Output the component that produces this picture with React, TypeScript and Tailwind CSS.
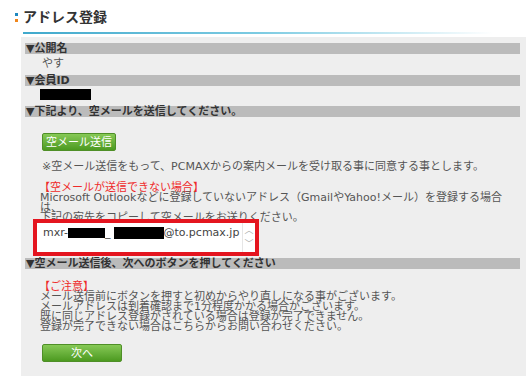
import React from 'react'

const font = { fontFamily: '"DejaVu Sans", "Noto Sans CJK JP", sans-serif' }

function SectionBar({ children }: { children: React.ReactNode }) {
  return (
    <div className="mr-[6px] h-[11px] whitespace-nowrap bg-[#bbbbbb] pl-[1px] text-[11px] font-bold leading-[11px] text-[#333]">
      ▼{children}
    </div>
  )
}

function GreenButton({ label, width }: { label: string; width: string }) {
  return (
    <div
      className={`${width} flex h-[18px] items-center justify-center rounded-[2px] border border-[#4f8f27] bg-gradient-to-b from-[#86c955] to-[#4c9a1f] text-[11px] leading-none text-white`}
    >
      {label}
    </div>
  )
}

export default function App() {
  return (
    <div className="relative h-[376px] w-[526px] overflow-hidden bg-white text-[#555]" style={font}>
      {/* title */}
      <div className="flex items-center pl-[15px] pt-[9px]">
        <div className="mr-[5px] flex flex-col gap-[3px]">
          <span className="h-[3px] w-[3px] bg-[#1e88bf]" />
          <span className="h-[3px] w-[3px] bg-[#f0861c]" />
        </div>
        <h1 className="text-[14px] font-bold leading-[16px] text-[#333]">アドレス登録</h1>
      </div>
      <div className="ml-[23px] mt-[7px] h-[2px] w-[470px] bg-gradient-to-r from-[#3fa9cc] via-[#7ccbe2] to-transparent" />

      {/* panel */}
      <div className="ml-[21px] mt-[3px] h-[400px] bg-[#eeeeee] pl-[4px] pt-[6px]">
        <SectionBar>公開名</SectionBar>
        <div className="mt-[4px] pl-[17px] text-[11px] leading-[11px]">やす</div>
        <div className="mt-[6px]">
          <SectionBar>会員ID</SectionBar>
        </div>
        <div className="ml-[15px] mt-[3px] h-[11px] w-[51px] bg-black" />
        <div className="mt-[6px]">
          <SectionBar>下記より、空メールを送信してください。</SectionBar>
        </div>

        <div className="pl-[17px] pt-[16px]">
          <GreenButton label="空メール送信" width="w-[74px]" />
        </div>
        <p className="mt-[10px] whitespace-nowrap pl-[17px] text-[11px] leading-[11px]">
          ※空メール送信をもって、PCMAXからの案内メールを受け取る事に同意する事とします。
        </p>
        <p className="mt-[11px] pl-[14px] text-[11px] leading-[10px] text-[#ee2a2a]">【空メールが送信できない場合】</p>
        <div className="whitespace-nowrap pl-[15px] text-[11px] leading-[10px]">
          <p>Microsoft Outlookなどに登録していないアドレス（GmailやYahoo!メール）を登録する場合</p>
          <p>は、</p>
          <p>下記の宛先をコピーして空メールをお送りください。</p>
        </div>

        <div className="relative z-10 -mt-[4px] ml-[8px] w-[226px] border-[4px] border-[#e4151f] bg-white">
          <div className="relative h-[29px] whitespace-nowrap pl-[6px] pt-[4px] text-[11px] leading-[12px] text-[#444]">
            <span>mxr-</span>
            <span className="inline-block h-[10px] w-[37px] bg-black align-middle" />
            <span>_</span>
            <span className="ml-[3px] inline-block h-[12px] w-[50px] bg-black align-middle" />
            <span>@to.pcmax.jp</span>
            <div className="absolute right-0 top-0 flex h-full w-[13px] flex-col items-center justify-between border-l border-[#e6e6e6] py-[3px] text-[9px] leading-[9px] text-[#aaa]">
              <span>︿</span>
              <span>﹀</span>
            </div>
          </div>
        </div>

        <div className="mt-[2px]">
          <SectionBar>空メール送信後、次へのボタンを押してください</SectionBar>
        </div>
        <p className="mt-[13px] pl-[14px] text-[11px] leading-[10px] text-[#ee2a2a]">【ご注意】</p>
        <div className="whitespace-nowrap pl-[15px] text-[11px] leading-[10px]">
          <p>メール送信前にボタンを押すと初めからやり直しになる事がございます。</p>
          <p>メールアドレスは到着確認まで1分程度かかる場合がございます。</p>
          <p>既に同じアドレス登録がされている場合は登録が完了できません。</p>
          <p>登録が完了できない場合はこちらからお問い合わせください。</p>
        </div>
        <div className="pl-[17px] pt-[12px]">
          <GreenButton label="次へ" width="w-[80px]" />
        </div>
      </div>
    </div>
  )
}
